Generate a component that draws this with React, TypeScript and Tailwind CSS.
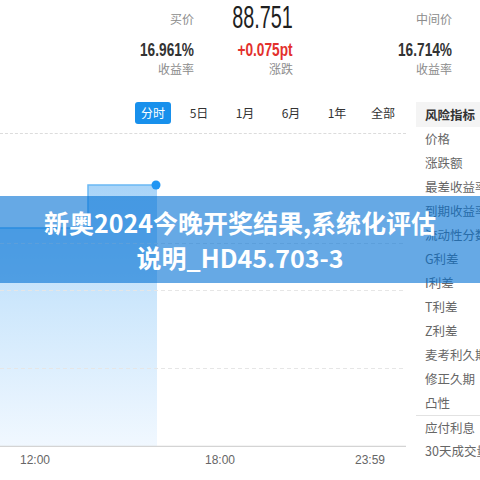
import React from "react";

const tabs = ["分时", "5日", "1月", "6月", "1年", "全部"];
const items = [
  "价格",
  "涨跌额",
  "最差收益率",
  "到期收益率",
  "流动性分数",
  "G利差",
  "I利差",
  "T利差",
  "Z利差",
  "麦考利久期",
  "修正久期",
  "凸性",
  "应付利息",
  "30天成交量",
];

function Chart() {
  return (
    <svg width="406" height="313" viewBox="0 0 406 313" className="block">
      <defs>
        <linearGradient id="fill" x1="0" y1="51" x2="0" y2="313" gradientUnits="userSpaceOnUse">
          <stop offset="0" stopColor="#a9d4f8" />
          <stop offset="0.45" stopColor="#cde7fc" />
          <stop offset="1" stopColor="#f1f8ff" />
        </linearGradient>
      </defs>
      <polygon points="0,94 88,94 88,51 157,51 157,313 0,313" fill="url(#fill)" />
      <g stroke="#e6e6e6" strokeWidth="1" strokeDasharray="4 3">
        <line x1="0" y1="109.5" x2="406" y2="109.5" />
        <line x1="0" y1="156.5" x2="406" y2="156.5" />
        <line x1="0" y1="234.5" x2="406" y2="234.5" />
      </g>
      <polyline points="0,94 88,94 88,51 157,51" fill="none" stroke="#6ab8f3" strokeWidth="1.5" />
      <circle cx="156" cy="51" r="4.5" fill="#2196f3" />
      <line x1="0" y1="312.5" x2="406" y2="312.5" stroke="#d4d4d4" strokeWidth="1.5" />
    </svg>
  );
}

export default function App() {
  return (
    <div className="relative w-[480px] h-[480px] overflow-hidden bg-white font-['Noto_Sans_CJK_SC',sans-serif]">
      {/* top stats */}
      <div className="flex h-[98px]">
        <div className="w-[194px] flex flex-col items-end pt-[11px]">
          <div className="h-[16px] text-[12px] leading-[16px] text-[#8c8c8c]">买价</div>
          <div className="mt-[12px] h-[22px] flex justify-end">
            <span className="inline-block origin-right scale-x-[0.72] font-['Liberation_Sans',sans-serif] font-bold text-[19px] leading-[22px] text-[#333]">
              16.961%
            </span>
          </div>
          <div className="h-[16px] text-[12px] leading-[16px] text-[#8c8c8c]">收益率</div>
        </div>
        <div className="w-[99px] flex flex-col items-end">
          <div className="h-[34px] flex justify-end">
            <span className="inline-block origin-right scale-x-[0.62] font-['Liberation_Sans',sans-serif] text-[32px] leading-[34px] text-[#1f1f1f]">
              88.751
            </span>
          </div>
          <div className="mt-[5px] h-[22px] flex justify-end">
            <span className="inline-block origin-right scale-x-[0.72] font-['Liberation_Sans',sans-serif] font-bold text-[19px] leading-[22px] text-[#e3302c]">
              +0.075pt
            </span>
          </div>
          <div className="h-[16px] text-[12px] leading-[16px] text-[#8c8c8c]">涨跌</div>
        </div>
        <div className="w-[159px] flex flex-col items-end pt-[11px]">
          <div className="h-[16px] text-[12px] leading-[16px] text-[#8c8c8c]">中间价</div>
          <div className="mt-[12px] h-[22px] flex justify-end">
            <span className="inline-block origin-right scale-x-[0.72] font-['Liberation_Sans',sans-serif] font-bold text-[19px] leading-[22px] text-[#333]">
              16.714%
            </span>
          </div>
          <div className="h-[16px] text-[12px] leading-[16px] text-[#8c8c8c]">收益率</div>
        </div>
      </div>

      {/* lower section */}
      <div className="flex">
        <div className="w-[406px] flex flex-col">
          <div className="h-[36px] flex pt-[4px] pl-[130px] border-b border-dashed border-[#dcdcdc]">
            {tabs.map((t, i) => (
              <div key={t} className="w-[47px] flex justify-center">
                {i === 0 ? (
                  <span className="h-[22px] w-[36px] rounded-[3px] bg-[#1890ec] text-white text-[12px] leading-[22px] text-center">
                    {t}
                  </span>
                ) : (
                  <span className="h-[22px] text-[12px] leading-[22px] text-[#333]">{t}</span>
                )}
              </div>
            ))}
          </div>
          <Chart />
          <div className="flex pt-[6px] text-[12px] leading-[14px] text-[#666] font-['Liberation_Sans',sans-serif]">
            <div className="ml-[20px] w-[30px] text-center">12:00</div>
            <div className="ml-[155px] w-[30px] text-center">18:00</div>
            <div className="ml-[120px] w-[30px] text-center">23:59</div>
          </div>
        </div>
        <div className="ml-[10px] w-[64px] pt-[4px] flex flex-col">
          <div className="h-[25px] bg-[#f4f4f4] pl-[9px] text-[12.5px] leading-[25px] font-bold text-[#333] whitespace-nowrap">
            风险指标
          </div>
          {items.map((t) => (
            <div
              key={t}
              className={
                "h-[24px] pl-[9px] text-[12.5px] leading-[24px] text-[#666] whitespace-nowrap" +
                (t === "应付利息" ? " border-t border-[#e2e2e2]" : "")
              }
            >
              {t}
            </div>
          ))}
        </div>
      </div>

      {/* banner overlay */}
      <div className="absolute left-0 top-[196px] w-full h-[87px] bg-[rgba(0,112,212,0.6)] flex flex-col items-center justify-center text-white font-bold text-[25px] leading-[35px]">
        <div>新奥2024今晚开奖结果,系统化评估</div>
        <div>说明_HD45.703-3</div>
      </div>
    </div>
  );
}
